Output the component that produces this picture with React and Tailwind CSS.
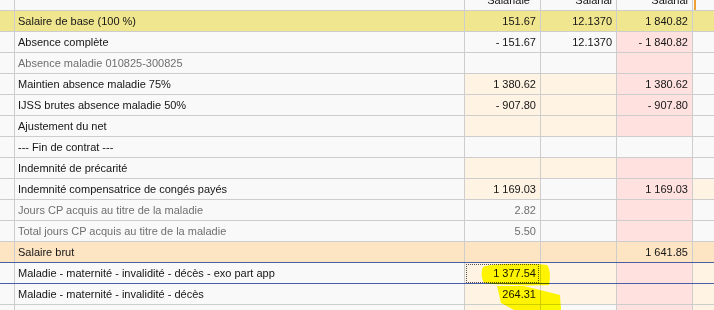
const GRID = 'grid grid-cols-[15px_450px_76px_76px_76px_1fr]'

const BG = {
  w: 'bg-[#f9f9f9]',
  c: 'bg-[#fff4e4]',
  p: 'bg-[#ffe1df]',
  y: 'bg-[#f0e68f]',
  o: 'bg-[#fde5c3]',
}

const rows = [
  { label: 'Salaire de base (100 %)', v: ['151.67', '12.1370', '1 840.82'], cells: ['y', 'y', 'y', 'y', 'y', 'y'] },
  { label: 'Absence complète', v: ['- 151.67', '12.1370', '- 1 840.82'], cells: ['w', 'w', 'w', 'w', 'p', 'w'] },
  { label: 'Absence maladie 010825-300825', gray: true, v: ['', '', ''], cells: ['w', 'w', 'w', 'w', 'p', 'w'] },
  { label: 'Maintien absence maladie 75%', v: ['1 380.62', '', '1 380.62'], cells: ['w', 'w', 'c', 'c', 'p', 'w'] },
  { label: 'IJSS brutes absence maladie 50%', v: ['- 907.80', '', '- 907.80'], cells: ['w', 'w', 'c', 'c', 'p', 'w'] },
  { label: 'Ajustement du net', v: ['', '', ''], cells: ['w', 'w', 'c', 'c', 'p', 'w'] },
  { label: '--- Fin de contrat ---', v: ['', '', ''], cells: ['w', 'w', 'w', 'w', 'w', 'w'] },
  { label: 'Indemnité de précarité', v: ['', '', ''], cells: ['w', 'w', 'c', 'c', 'p', 'w'] },
  { label: 'Indemnité compensatrice de congés payés', v: ['1 169.03', '', '1 169.03'], cells: ['w', 'w', 'c', 'w', 'p', 'c'] },
  { label: 'Jours CP acquis au titre de la maladie', gray: true, v: ['2.82', '', ''], cells: ['w', 'w', 'w', 'w', 'p', 'w'] },
  { label: 'Total jours CP acquis au titre de la maladie', gray: true, v: ['5.50', '', ''], cells: ['w', 'w', 'w', 'w', 'p', 'w'] },
  { label: 'Salaire brut', v: ['', '', '1 641.85'], cells: ['o', 'o', 'o', 'o', 'o', 'o'], blue: true },
  { label: 'Maladie - maternité - invalidité - décès - exo part app', v: ['1 377.54', '', ''], cells: ['w', 'w', 'c', 'c', 'p', 'c'], blue: true, focus: true },
  { label: 'Maladie - maternité - invalidité - décès', v: ['264.31', '', ''], cells: ['w', 'w', 'c', 'c', 'p', 'c'] },
  { label: '', v: ['', '', ''], cells: ['w', 'w', 'c', 'w', 'p', 'c'] },
]

function Row({ row }) {
  const line = row.blue ? 'border-[#4a5ea6]' : 'border-[#cdcdcd]'
  const text = row.gray ? 'text-[#6f6f6f]' : 'text-[#151515]'
  return (
    <div className={`${GRID} h-[21px] border-b ${line} ${text}`}>
      <div className={`${BG[row.cells[0]]} border-r border-[#cdcdcd]`} />
      <div className={`${BG[row.cells[1]]} border-r border-[#cdcdcd] pl-[3px] flex items-center whitespace-nowrap`}>
        {row.label}
      </div>
      {row.v.map((val, i) => (
        <div
          key={i}
          className={`${BG[row.cells[i + 2]]} border-r border-[#cdcdcd] flex items-center justify-end`}
        >
          {row.focus && i === 0 ? (
            <div className="w-full h-[19px] mx-[1px] border border-dotted border-[#555] flex items-center justify-end pr-[2px]">
              {val}
            </div>
          ) : (
            <span className="pr-[4px]">{val}</span>
          )}
        </div>
      ))}
      <div className={BG[row.cells[5]]} />
    </div>
  )
}

export default function App() {
  return (
    <div className="relative w-[714px] h-[310px] overflow-hidden bg-[#f9f9f9] font-['Liberation_Sans',Arial,sans-serif] text-[11px] leading-none">
      <div className={`${GRID} h-[11px] border-b border-[#cdcdcd] text-[#151515]`}>
        <div className="border-r border-[#cdcdcd]" />
        <div className="border-r border-[#cdcdcd]" />
        <div className="border-r border-[#cdcdcd] overflow-hidden flex items-start justify-end pr-[10px]">
          <span className="mt-[-5px]">Salariale</span>
        </div>
        <div className="border-r border-[#cdcdcd] overflow-hidden flex items-start justify-end pr-[4px]">
          <span className="mt-[-5px]">Salarial</span>
        </div>
        <div className="border-r border-[#cdcdcd] overflow-hidden flex items-start justify-end pr-[4px]">
          <span className="mt-[-5px]">Salarial</span>
        </div>
        <div className="flex pl-[1px]">
          <div className="w-[2px] bg-[#f0a030]" />
        </div>
      </div>
      {rows.map((row, i) => (
        <Row key={i} row={row} />
      ))}
      <svg className="absolute inset-0 pointer-events-none mix-blend-multiply" width="714" height="310" viewBox="0 0 714 310">
        <path d="M483,267 C492,263 535,263 547,265 C551,270 550,280 549,285 C530,286 500,285 484,283 C481,278 481,271 483,267 Z" fill="#ffff00" />
        <path d="M497,286 L524,286 L560,295 L561,310 L514,310 L501,303 Z" fill="#ffff00" />
      </svg>
    </div>
  )
}
